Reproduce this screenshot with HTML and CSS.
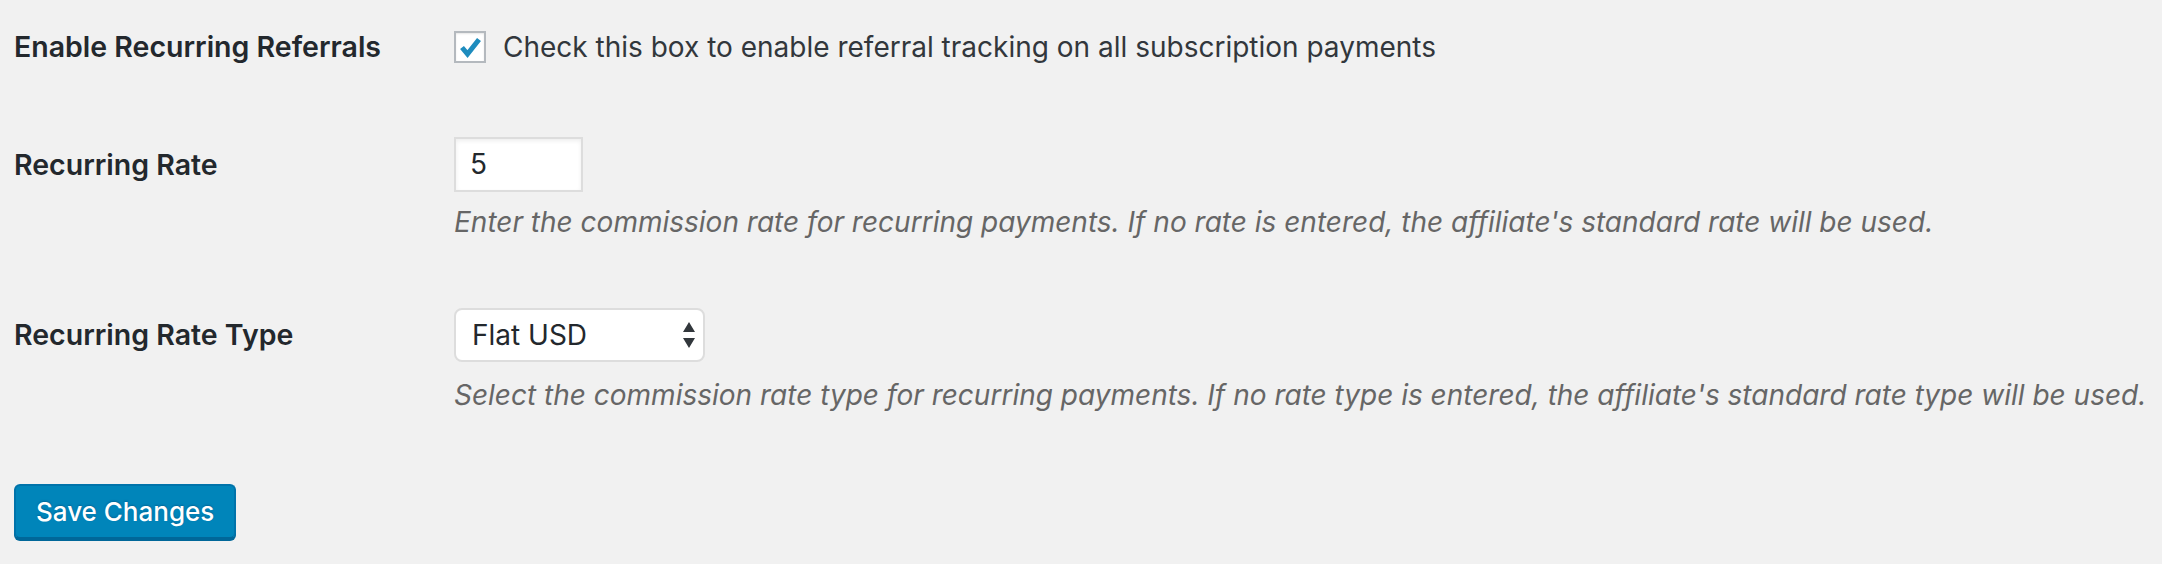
FILE: index.html
```html
<!DOCTYPE html>
<html>
<head>
<meta charset="utf-8">
<link rel="stylesheet" href="styles.css">
</head>
<body>
<form class="settings">
  <div class="row row-check">
    <div class="label">Enable Recurring Referrals</div>
    <div class="field">
      <label class="check">
        <span class="box"><svg viewBox="0 0 28 28" width="28" height="28"><path d="M6 14.5 11.5 21 23 6.5" fill="none" stroke="#1e8cbe" stroke-width="5" stroke-linecap="butt" stroke-linejoin="miter"/></svg></span>
        <span class="check-text">Check this box to enable referral tracking on all subscription payments</span>
      </label>
    </div>
  </div>
  <div class="row row-rate">
    <div class="label tall">Recurring Rate</div>
    <div class="field">
      <div class="input">5</div>
      <p class="desc">Enter the commission rate for recurring payments. If no rate is entered, the affiliate's standard rate will be used.</p>
    </div>
  </div>
  <div class="row row-type">
    <div class="label tall2">Recurring Rate Type</div>
    <div class="field">
      <div class="select"><span>Flat USD</span><svg class="arrows" viewBox="0 0 12 26" width="12" height="26"><path d="M6 0 12 10H0Z M6 26 12 16H0Z" fill="#32373c"/></svg></div>
      <p class="desc">Select the commission rate type for recurring payments. If no rate type is entered, the affiliate's standard rate type will be used.</p>
    </div>
  </div>
  <div class="submit"><span class="button">Save Changes</span></div>
</form>
</body>
</html>
```
FILE: styles.css
```css
html, body {
  margin: 0;
  padding: 0;
  background: #f1f1f1;
}
body {
  font-family: "Inter", "Liberation Sans", sans-serif;
  color: #444;
  width: 2162px;
  height: 564px;
  overflow: hidden;
}
.settings {
  padding: 0 0 0 14px;
}
.row {
  display: flex;
}
.label {
  width: 440px;
  flex: none;
  font-size: 28.5px;
  font-weight: 600;
  color: #23282d;
  line-height: 32px;
}
.label.tall { line-height: 55px; }
.label.tall2 { line-height: 54px; }
.row-check { padding-top: 31px; }
.row-rate { margin-top: 74px; }
.row-type { margin-top: 68px; }
.check {
  display: flex;
  align-items: center;
  gap: 17px;
}
.box {
  width: 28px;
  height: 28px;
  background: #fff;
  border: 2px solid #b4b9be;
  box-shadow: inset 0 1px 2px rgba(0,0,0,.1);
  display: block;
}
.box svg { display: block; }
.check-text {
  font-size: 28px;
  line-height: 32px;
  color: #32373c;
}
.input {
  height: 51px;
  box-sizing: content-box;
  background: #fff;
  border: 2px solid #ddd;
  box-shadow: inset 0 2px 4px rgba(0,0,0,.07);
  font-size: 28px;
  line-height: 51px;
  padding-left: 14px;
  width: 111px;
  color: #23282d;
}
.desc {
  margin: 12px 0 0;
  font-size: 28px;
  line-height: 36px;
  font-style: italic;
  color: #666;
}
.row-type .desc { margin-top: 15px; }
.select {
  width: 251px;
  height: 54px;
  box-sizing: border-box;
  background: #fff;
  border: 2px solid #ddd;
  border-radius: 8px;
  display: flex;
  align-items: center;
  justify-content: space-between;
  padding: 0 8px 0 16px;
  font-size: 28px;
  color: #23282d;
}
.submit {
  margin-top: 71px;
}
.button {
  display: inline-block;
  background: #0085ba;
  border: 2px solid #0073aa;
  border-bottom-color: #006799;
  box-shadow: 0 2px 0 #006799;
  border-radius: 6px;
  color: #fff;
  font-size: 26px;
  font-weight: 500;
  line-height: 51px;
  padding: 0 20px;
  text-shadow: 0 -1px 2px #006799;
}
```
